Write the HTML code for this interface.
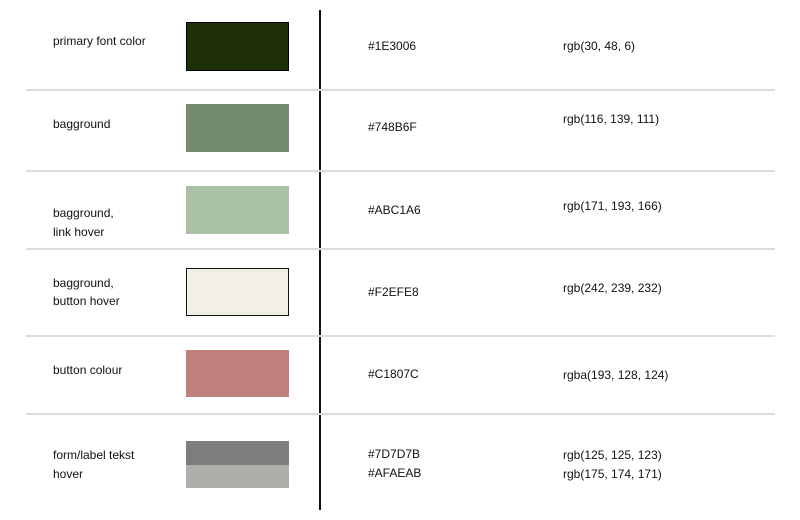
<!DOCTYPE html>
<html><head><meta charset="utf-8"><style>
body{margin:0;width:800px;height:520px;background:#fff;position:relative;overflow:hidden;font-family:"Liberation Sans",sans-serif;font-size:12px;color:#111;}
.t{position:absolute;line-height:16px;white-space:nowrap;}
.h{position:absolute;left:26px;width:749px;height:2px;background:#dcdcdc;}
.s{position:absolute;left:186px;width:103px;box-sizing:border-box;}
</style></head><body>
<div style="position:absolute;left:319px;top:10px;width:2px;height:500px;background:#111"></div>
<div class="h" style="top:89px"></div>
<div class="h" style="top:170px"></div>
<div class="h" style="top:248px"></div>
<div class="h" style="top:335px"></div>
<div class="h" style="top:413px"></div>

<div class="s" style="top:22px;height:49px;background:#1E3006;border:1.5px solid #000"></div>
<div class="s" style="top:104px;height:48px;background:#748B6F"></div>
<div class="s" style="top:186px;height:48px;background:#ABC1A6"></div>
<div class="s" style="top:268px;height:48px;background:#F2EFE8;border:1.5px solid #111"></div>
<div class="s" style="top:350px;height:47px;background:#C1807C"></div>
<div class="s" style="top:441px;height:24px;background:#7D7D7B"></div>
<div class="s" style="top:465px;height:23px;background:#AFAEAB"></div>

<div class="t" style="left:53px;top:33px">primary font color</div>
<div class="t" style="left:53px;top:116px">bagground</div>
<div class="t" style="left:53px;top:205px">bagground,</div>
<div class="t" style="left:53px;top:224px">link hover</div>
<div class="t" style="left:53px;top:275px">bagground,</div>
<div class="t" style="left:53px;top:293px">button hover</div>
<div class="t" style="left:53px;top:362px">button colour</div>
<div class="t" style="left:53px;top:447px">form/label tekst</div>
<div class="t" style="left:53px;top:466px">hover</div>

<div class="t" style="left:368px;top:38px">#1E3006</div>
<div class="t" style="left:368px;top:119px">#748B6F</div>
<div class="t" style="left:368px;top:202px">#ABC1A6</div>
<div class="t" style="left:368px;top:284px">#F2EFE8</div>
<div class="t" style="left:368px;top:366px">#C1807C</div>
<div class="t" style="left:368px;top:446px">#7D7D7B</div>
<div class="t" style="left:368px;top:465px">#AFAEAB</div>

<div class="t" style="left:563px;top:38px">rgb(30, 48, 6)</div>
<div class="t" style="left:563px;top:111px">rgb(116, 139, 111)</div>
<div class="t" style="left:563px;top:198px">rgb(171, 193, 166)</div>
<div class="t" style="left:563px;top:280px">rgb(242, 239, 232)</div>
<div class="t" style="left:563px;top:367px">rgba(193, 128, 124)</div>
<div class="t" style="left:563px;top:447px">rgb(125, 125, 123)</div>
<div class="t" style="left:563px;top:466px">rgb(175, 174, 171)</div>
</body></html>
